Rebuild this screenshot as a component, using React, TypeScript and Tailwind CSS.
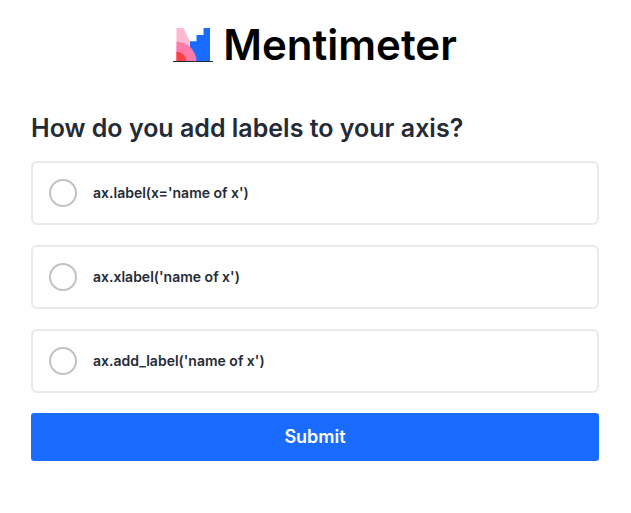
import { useState } from "react";

const OPTIONS = [
  "ax.label(x='name of x')",
  "ax.xlabel('name of x')",
  "ax.add_label('name of x')",
];

function LogoMark() {
  return (
    <svg aria-hidden="true" viewBox="0 0 40 34" className="h-[34px] w-10 shrink-0">
      <path d="M37 0V34H15V18L17 13.5H23.5V7H30.5V0Z" fill="#196cff" />
      <path d="M3.5 0H10.3L17 13.5V34H3.5Z" fill="#ffb8d0" />
      <path d="M17 13.5V34H24V13.5Z" fill="#196cff" />
      <path d="M3.5 13.7A20 20 0 0 1 23.5 33.5H3.5Z" fill="#ff7aa8" />
      <path d="M3.5 23.7A10 10 0 0 1 13.5 33.5H3.5Z" fill="#ff3f3f" />
      <path d="M0 33.5H40" stroke="#27272f" strokeWidth="1" />
    </svg>
  );
}

export default function App() {
  const [selected, setSelected] = useState<string | null>(null);

  return (
    <main className="min-h-screen bg-white pt-5 pr-8 pl-[31px] font-['Inter',sans-serif] text-[#252b36]">
      <header className="flex h-[50px] items-center justify-center gap-2.5">
        <LogoMark />
        <span className="text-[42px] leading-[50px] font-semibold text-black">Mentimeter</span>
      </header>

      <form onSubmit={(event) => event.preventDefault()}>
        <fieldset>
          <legend className="pt-10 pb-[15px] text-[25px] leading-9 font-semibold">
            How do you add labels to your axis?
          </legend>
          <div className="flex flex-col gap-5">
            {OPTIONS.map((option) => (
              <label
                key={option}
                className="flex h-16 items-center gap-4 rounded-md border-2 border-[#e9e9e9] px-4"
              >
                <input
                  type="radio"
                  name="answer"
                  value={option}
                  checked={selected === option}
                  onChange={() => setSelected(option)}
                  className="size-7 shrink-0 appearance-none rounded-full border-2 border-[#c1c2c6] checked:border-8 checked:border-[#196cff]"
                />
                <span className="text-sm font-semibold">{option}</span>
              </label>
            ))}
          </div>
        </fieldset>
        <button
          type="submit"
          className="mt-5 h-12 w-full rounded-[3px] bg-[#196cff] text-lg font-semibold text-white"
        >
          Submit
        </button>
      </form>
    </main>
  );
}
